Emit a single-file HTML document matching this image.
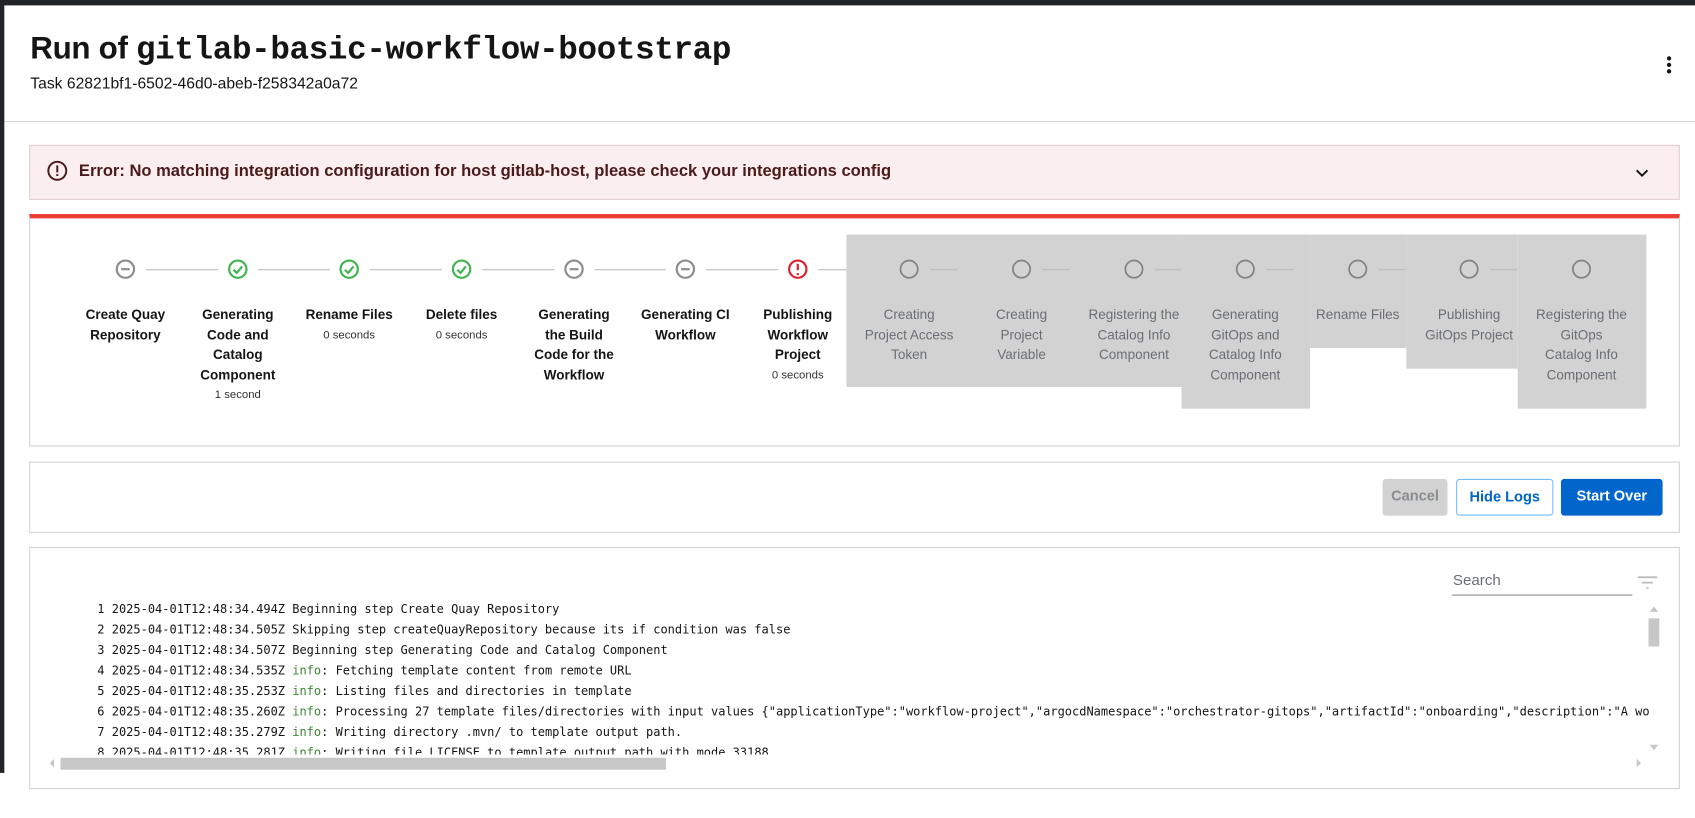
<!DOCTYPE html>
<html><head><meta charset="utf-8"><style>
*{box-sizing:border-box;margin:0;padding:0}
body{width:1695px;height:818px;background:#fff;font-family:"Liberation Sans",sans-serif;color:#151515;position:relative;overflow:hidden}
#w{position:absolute;left:0;top:0;width:1568px;height:757px;transform:scale(1.081);transform-origin:0 0}
.abs{position:absolute}
.topbar{left:0;top:0;width:1568px;height:5px;background:#212427}
.leftbar{left:0;top:0;width:4px;height:715px;background:#212427}
h1{position:absolute;left:28px;top:29px;font-size:29px;font-weight:700;letter-spacing:-0.3px;white-space:nowrap}
h1 code{font-family:"Liberation Mono",monospace;font-weight:700;font-size:30.1px;letter-spacing:-0.3px}
.task{left:28px;top:70px;font-size:14.5px;white-space:nowrap}
.kebab{left:1542px;top:52px;width:4px}
.kebab i{display:block;width:4px;height:4px;background:#151515;border-radius:50%;margin-bottom:2px}
.hr{left:4px;top:112px;width:1564px;height:1px;background:#d2d2d2}
.card{border:1px solid #d2d2d2;background:#fff}
.err{left:27px;top:134px;width:1527px;height:51px;background:#faeeee;border:1px solid #e5cfcf}
.err span{position:absolute;left:45px;top:15px;font-size:15.3px;font-weight:700;color:#4b1a1a;white-space:nowrap}
.step{position:absolute;width:104px;text-align:center;font-size:12.5px;line-height:18.5px;white-space:nowrap}
.step b{font-weight:700;display:block}
.step small{font-size:10.5px;display:block;color:#333}
.gray{background:#d2d2d2}
.step.p{color:#6a6e73}
.line{position:absolute;height:1px;background:#b8bbbe;top:249px}
.btn{position:absolute;top:443px;height:34px;border-radius:3px;font-size:13.5px;font-weight:700;text-align:center;line-height:32px}
.log{position:absolute;left:90px;font-family:"DejaVu Sans Mono","Liberation Mono",monospace;font-size:11.1px;white-space:pre;color:#151515}
.g{color:#3e8635}
</style></head><body><div id="w">
<div class="abs topbar"></div><div class="abs leftbar"></div>
<h1>Run of <code>gitlab-basic-workflow-bootstrap</code></h1>
<div class="abs task">Task 62821bf1-6502-46d0-abeb-f258342a0a72</div>
<div class="abs kebab"><i></i><i></i><i></i></div>
<div class="abs hr"></div>

<div class="abs err"><svg class="abs" style="left:15px;top:13px" width="20" height="20" viewBox="0 0 20 20"><circle cx="10" cy="10" r="8.3" fill="none" stroke="#4b1a1a" stroke-width="1.8"/><rect x="9.1" y="5" width="1.8" height="6.5" fill="#4b1a1a"/><rect x="9.1" y="13" width="1.8" height="1.8" fill="#4b1a1a"/></svg><span>Error: No matching integration configuration for host gitlab-host, please check your integrations config</span>
<svg class="abs" style="left:1484px;top:18px" width="14" height="14" viewBox="0 0 14 14"><path d="M2 4.5 L7 9.5 L12 4.5" fill="none" stroke="#151515" stroke-width="1.8"/></svg></div>

<div class="abs card" style="left:27px;top:198px;width:1527px;height:215px;border-top:4px solid #ee3e34"></div>
<div class="abs gray" style="left:783px;top:217px;width:310px;height:141px"></div>
<div class="abs gray" style="left:1093px;top:217px;width:119px;height:161px"></div>
<div class="abs gray" style="left:1212px;top:217px;width:89px;height:105px"></div>
<div class="abs gray" style="left:1301px;top:217px;width:103px;height:124px"></div>
<div class="abs gray" style="left:1404px;top:217px;width:119px;height:161px"></div>

<div class="line" style="left:135px;width:67px"></div>
<div class="line" style="left:239px;width:66px"></div>
<div class="line" style="left:342px;width:67px"></div>
<div class="line" style="left:446px;width:67px"></div>
<div class="line" style="left:550px;width:66px"></div>
<div class="line" style="left:653px;width:67px"></div>
<div class="line" style="left:757px;width:26px"></div>
<div class="line" style="left:860px;width:26px"></div>
<div class="line" style="left:964px;width:26px"></div>
<div class="line" style="left:1068px;width:25px"></div>
<div class="line" style="left:1171px;width:26px"></div>
<div class="line" style="left:1275px;width:26px"></div>
<div class="line" style="left:1378px;width:26px"></div>

<svg class="abs" style="left:0;top:0" width="1568" height="300">
<g fill="none" stroke-width="2">
<g stroke="#8a8d90"><circle cx="116" cy="249" r="8"/><path d="M112 249h8"/>
<circle cx="531" cy="249" r="8"/><path d="M527 249h8"/><circle cx="634" cy="249" r="8"/><path d="M630 249h8"/></g>
<g stroke="#3eb550"><circle cx="220" cy="249" r="8"/><path d="M216 249.5l3 3 5-6"/><circle cx="323" cy="249" r="8"/><path d="M319 249.5l3 3 5-6"/><circle cx="427" cy="249" r="8"/><path d="M423 249.5l3 3 5-6"/></g>
<g stroke="#e0202e"><circle cx="738" cy="249" r="8"/><path d="M738 244v6M738 252.5v2"/></g>
<g stroke="#7f8285" stroke-width="1.6"><circle cx="841" cy="249" r="8"/><circle cx="945" cy="249" r="8"/><circle cx="1049" cy="249" r="8"/><circle cx="1152" cy="249" r="8"/><circle cx="1256" cy="249" r="8"/><circle cx="1359" cy="249" r="8"/><circle cx="1463" cy="249" r="8"/></g>
</g></svg>

<div class="step" style="left:64px;top:282px"><b>Create Quay<br>Repository</b></div>
<div class="step" style="left:168px;top:282px"><b>Generating<br>Code and<br>Catalog<br>Component</b><small>1 second</small></div>
<div class="step" style="left:271px;top:282px"><b>Rename Files</b><small>0 seconds</small></div>
<div class="step" style="left:375px;top:282px"><b>Delete files</b><small>0 seconds</small></div>
<div class="step" style="left:479px;top:282px"><b>Generating<br>the Build<br>Code for the<br>Workflow</b></div>
<div class="step" style="left:582px;top:282px"><b>Generating CI<br>Workflow</b></div>
<div class="step" style="left:686px;top:282px"><b>Publishing<br>Workflow<br>Project</b><small>0 seconds</small></div>
<div class="step p" style="left:789px;top:282px">Creating<br>Project Access<br>Token</div>
<div class="step p" style="left:893px;top:282px">Creating<br>Project<br>Variable</div>
<div class="step p" style="left:997px;top:282px">Registering the<br>Catalog Info<br>Component</div>
<div class="step p" style="left:1100px;top:282px">Generating<br>GitOps and<br>Catalog Info<br>Component</div>
<div class="step p" style="left:1204px;top:282px">Rename Files</div>
<div class="step p" style="left:1307px;top:282px">Publishing<br>GitOps Project</div>
<div class="step p" style="left:1411px;top:282px">Registering the<br>GitOps<br>Catalog Info<br>Component</div>

<div class="abs card" style="left:27px;top:427px;width:1527px;height:66px"></div>
<div class="btn" style="left:1279px;width:60px;background:#d2d2d2;color:#8a8d90">Cancel</div>
<div class="btn" style="left:1347px;width:90px;border:1px solid #73bcf7;color:#0066cc">Hide Logs</div>
<div class="btn" style="left:1444px;width:94px;background:#0066cc;color:#fff">Start Over</div>

<div class="abs card" style="left:27px;top:506px;width:1527px;height:224px"></div>
<div class="abs" style="left:1344px;top:528px;font-size:14px;color:#6a6e73">Search</div>
<div class="abs" style="left:1343px;top:550px;width:167px;height:1px;background:#8a8d90"></div>
<svg class="abs" style="left:1514px;top:532px" width="20" height="14"><path d="M1 2h18M5 7h10M9 12h2" stroke="#b8bbbe" stroke-width="1.6"/></svg>
<div class="abs" style="left:40px;top:557px;width:1513px;height:141px;overflow:hidden">
<div class="log" style="left:50px;top:0">1 2025-04-01T12:48:34.494Z Beginning step Create Quay Repository</div>
<div class="log" style="left:50px;top:19px">2 2025-04-01T12:48:34.505Z Skipping step createQuayRepository because its if condition was false</div>
<div class="log" style="left:50px;top:38px">3 2025-04-01T12:48:34.507Z Beginning step Generating Code and Catalog Component</div>
<div class="log" style="left:50px;top:57px">4 2025-04-01T12:48:34.535Z <span class="g">info</span>: Fetching template content from remote URL</div>
<div class="log" style="left:50px;top:76px">5 2025-04-01T12:48:35.253Z <span class="g">info</span>: Listing files and directories in template</div>
<div class="log" style="left:50px;top:95px">6 2025-04-01T12:48:35.260Z <span class="g">info</span>: Processing 27 template files/directories with input values {"applicationType":"workflow-project","argocdNamespace":"orchestrator-gitops","artifactId":"onboarding","description":"A wo</div>
<div class="log" style="left:50px;top:114px">7 2025-04-01T12:48:35.279Z <span class="g">info</span>: Writing directory .mvn/ to template output path.</div>
<div class="log" style="left:50px;top:133px">8 2025-04-01T12:48:35.281Z <span class="g">info</span>: Writing file LICENSE to template output path with mode 33188.</div>
</div>
<div class="abs" style="left:1526px;top:561px;width:0;height:0;border-left:4px solid transparent;border-right:4px solid transparent;border-bottom:5px solid #c7c7c7"></div>
<div class="abs" style="left:1525px;top:572px;width:10px;height:26px;background:#c7c7c7"></div>
<div class="abs" style="left:1526px;top:689px;width:0;height:0;border-left:4px solid transparent;border-right:4px solid transparent;border-top:5px solid #c7c7c7"></div>
<div class="abs" style="left:46px;top:702px;width:0;height:0;border-top:4px solid transparent;border-bottom:4px solid transparent;border-right:4px solid #c7c7c7"></div>
<div class="abs" style="left:56px;top:701px;width:560px;height:11px;background:#c7c7c7"></div>
<div class="abs" style="left:1514px;top:702px;width:0;height:0;border-top:4px solid transparent;border-bottom:4px solid transparent;border-left:4px solid #c7c7c7"></div>
</div></body></html>
